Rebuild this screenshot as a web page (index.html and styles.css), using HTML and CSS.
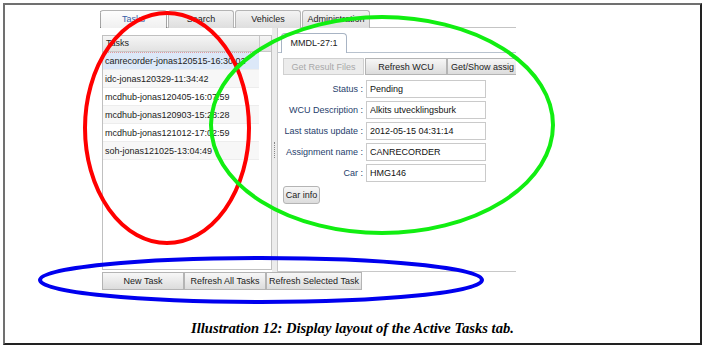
FILE: index.html
```html
<!DOCTYPE html>
<html lang="en">
<head>
	<title>Active Tasks tab</title>
	<link rel="stylesheet" href="styles.css">
</head>
<body>
	<div class="frame">
		<div class="app">
			<div class="tabbar">
				<div class="tab tab-active">Tasks</div>
				<div class="tab">Search</div>
				<div class="tab">Vehicles</div>
				<div class="tab tab-wide">Administration</div>
			</div>
			<div class="workspace">
				<div class="tasks">
					<div class="tasks-head">
						<span class="th">Tasks</span>
						<span class="th-fill"></span>
					</div>
					<ul class="task-list">
						<li class="selected">canrecorder-jonas120515-16:30:02</li>
						<li>idc-jonas120329-11:34:42</li>
						<li>mcdhub-jonas120405-16:07:59</li>
						<li>mcdhub-jonas120903-15:28:28</li>
						<li>mcdhub-jonas121012-17:02:59</li>
						<li>soh-jonas121025-13:04:49</li>
					</ul>
				</div>
				<div class="splitter"><span class="grip"></span></div>
				<div class="detail">
					<div class="subtabs">
						<div class="subtab">MMDL-27:1</div>
					</div>
					<div class="actions">
						<button class="btn btn-disabled">Get Result Files</button>
						<button class="btn">Refresh WCU</button>
						<button class="btn btn-cut">Get/Show assig</button>
					</div>
					<div class="form">
						<label for="status">Status :</label>
						<input type="text" id="status" value="Pending" readonly>
						<label for="wcu">WCU Description :</label>
						<input type="text" id="wcu" value="Alkits utvecklingsburk" readonly>
						<label for="updated">Last status update :</label>
						<input type="text" id="updated" value="2012-05-15 04:31:14" readonly>
						<label for="assignment">Assignment name :</label>
						<input type="text" id="assignment" value="CANRECORDER" readonly>
						<label for="car">Car :</label>
						<input type="text" id="car" value="HMG146" readonly>
					</div>
					<button class="btn car-info">Car info</button>
				</div>
			</div>
			<div class="bottom-bar">
				<button class="btn b-new">New Task</button>
				<button class="btn b-all">Refresh All Tasks</button>
				<button class="btn b-sel">Refresh Selected Task</button>
			</div>
		</div>
		<p class="caption">Illustration 12: Display layout of the Active Tasks tab.</p>
	</div>
	<svg class="marks" width="703" height="347" viewBox="0 0 703 347">
		<ellipse cx="167" cy="128" rx="82" ry="115" stroke="#ff0000"/>
		<ellipse cx="382" cy="125" rx="171" ry="108" stroke="#11ee11"/>
		<ellipse cx="261" cy="280" rx="221" ry="22" stroke="#0000ee"/>
	</svg>
</body>
</html>
```

FILE: styles.css
```css
body {
	margin: 0;
	position: relative;
	width: 703px;
	height: 347px;
	overflow: hidden;
	background: #fff;
	font-family: "Liberation Sans", Arial, sans-serif;
}
.frame {
	box-sizing: border-box;
	width: 699px;
	height: 342px;
	margin: 3px 0 0 3px;
	border: 2px solid #222;
	border-top-color: #707070;
	border-left-color: #707070;
}
.app {
	width: 416px;
	height: 282px;
	margin: 5px 0 0 95px;
	font-size: 9px;
	color: #222;
}
.btn {
	box-sizing: border-box;
	height: 18px;
	padding: 0;
	border: 1px solid #b4b4b4;
	background: linear-gradient(#f7f7f7, #dcdcdc);
	font: inherit;
	color: #222;
	white-space: nowrap;
	overflow: hidden;
}

/* main tabs */
.tabbar {
	display: flex;
	gap: 1px;
	height: 17px;
	border-bottom: 1px solid #c4c4c4;
}
.tab {
	box-sizing: border-box;
	width: 66px;
	height: 18px;
	border: 1px solid #b4b4b4;
	border-bottom: none;
	border-radius: 3px 3px 0 0;
	background: linear-gradient(#f3f3f3, #dedede);
	text-align: center;
	line-height: 17px;
}
.tab-active {
	width: 67px;
	background: linear-gradient(#fdfdfd, #f0f0f0);
	color: #3a60a8;
	border-left: 1px dotted #555;
	border-right: 1px dotted #555;
}
.tab-wide {
	width: 68px;
}

/* task list + details */
.workspace {
	display: flex;
	height: 244px;
}
.tasks {
	display: flex;
	flex-direction: column;
	width: 170px;
	box-sizing: border-box;
	margin: 7px 0 2px 2px;
	border: 1px solid #c0c0c0;
	background: #fff;
}
.tasks-head {
	display: flex;
	height: 15px;
	border-bottom: 1px solid #c8c8c8;
	background: linear-gradient(#f5f5f5, #e2e2e2);
}
.th {
	width: 153px;
	padding-left: 3px;
	border-right: 1px solid #c8c8c8;
	line-height: 15px;
}
.th-fill {
	flex: 1;
}
.task-list {
	list-style: none;
	margin: 0;
	padding: 0;
	width: 156px;
}
.task-list li {
	box-sizing: border-box;
	height: 18px;
	padding-left: 2px;
	line-height: 18px;
	border-bottom: 1px solid #ededed;
	white-space: nowrap;
	overflow: hidden;
}
.task-list li:nth-child(even) {
	background: #f7f7f7;
}
.task-list li.selected {
	background: #dce8f8;
	border-top: 1px dotted #e09a9a;
	line-height: 16px;
}
.splitter {
	display: flex;
	align-items: center;
	justify-content: center;
	width: 5px;
	background: #ececec;
}
.grip {
	height: 16px;
	border-left: 1px dotted #888;
}
.detail {
	flex: 1;
	min-width: 0;
	overflow: hidden;
	border-left: 1px solid #c8c8c8;
	border-bottom: 1px solid #c8c8c8;
}
.subtabs {
	height: 19px;
	margin-top: 5px;
	padding-left: 3px;
	border-bottom: 1px solid #b8c2ce;
}
.subtab {
	box-sizing: border-box;
	width: 66px;
	height: 20px;
	border: 1px solid #a8b4c4;
	border-bottom: none;
	border-radius: 4px 4px 0 0;
	background: #fff;
	text-align: center;
	line-height: 19px;
}
.actions {
	display: flex;
	height: 17px;
	margin-top: 5px;
	padding-left: 5px;
}
.actions .btn {
	height: 17px;
	flex-shrink: 0;
	width: 82px;
}
.actions .btn-disabled {
	width: 81px;
	margin-right: 1px;
	color: #a8a8a8;
	background: #ececec;
	border-color: #d0d0d0;
}
.actions .btn-cut {
	width: 70px;
	text-align: left;
	padding-left: 3px;
	border-right: none;
}
.form {
	display: grid;
	grid-template-columns: 80px 120px;
	column-gap: 3px;
	row-gap: 3px;
	margin-top: 5px;
	padding-left: 5px;
}
.form label {
	text-align: right;
	line-height: 18px;
	color: #26406c;
	white-space: nowrap;
}
.form input {
	box-sizing: border-box;
	width: 120px;
	height: 18px;
	margin: 0;
	padding: 0 3px;
	border: 1px solid #cacaca;
	font: inherit;
	color: #111;
	outline: none;
}
.car-info {
	display: block;
	width: 37px;
	margin: 4px 0 0 5px;
	border-radius: 3px;
}
.bottom-bar {
	display: flex;
	margin-left: 2px;
}
.b-new,
.b-all {
	width: 82px;
}
.b-sel {
	width: 96px;
}
.caption {
	margin: 28px 0 0;
	line-height: 16px;
	text-align: center;
	font-family: "Liberation Serif", "Times New Roman", serif;
	font-weight: bold;
	font-style: italic;
	font-size: 14.6px;
	color: #000;
}
.marks {
	position: absolute;
	left: 0;
	top: 0;
	pointer-events: none;
}
.marks ellipse {
	fill: none;
	stroke-width: 4;
}
```
